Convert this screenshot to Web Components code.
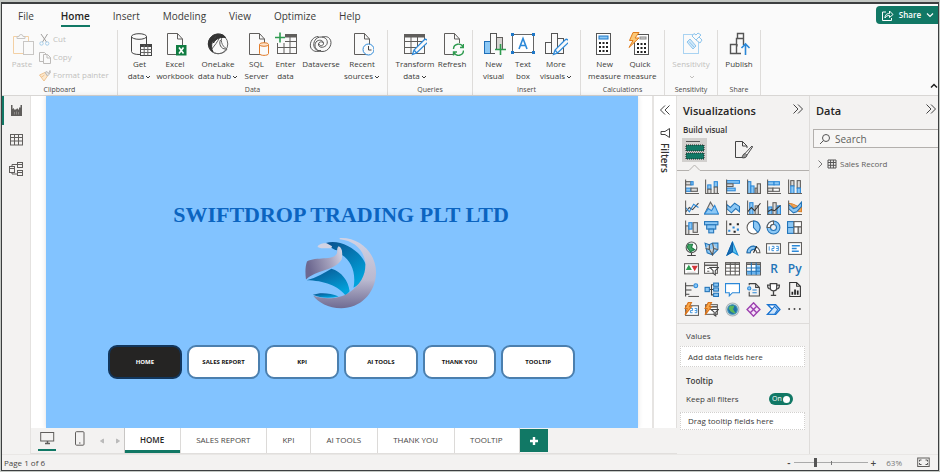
<!DOCTYPE html>
<html lang="en">
<head>
<meta charset="utf-8">
<title>Report editor</title>
<style>
html,body{height:100%}
body{margin:0;padding-top:2px;box-sizing:border-box;background:#c4c8c4;font-family:"Open Sans","Noto Sans",sans-serif;font-size:8px;line-height:12px;color:#3b3a39}
</style>
</head>
<body>
<report-app></report-app>
<script>
const K='#605e5c', N='#2b88d8', F='#8cc8f5', GR='#2e9b4f', LG='#d5d5d5';
const r=(x,y,w,h,f='none',s=K)=>`<rect x="${x}" y="${y}" width="${w}" height="${h}" fill="${f}" stroke="${s}"/>`;
const p=(d,s=K,f='none',w=1)=>`<path d="${d}" stroke="${s}" fill="${f}" stroke-width="${w}"/>`;
const c=(x,y,q,f='none',s=K)=>`<circle cx="${x}" cy="${y}" r="${q}" fill="${f}" stroke="${s}"/>`;
const paper=p('M4.5 1.5H14.5L19.5 7V22.5H4.5Z M14.5 1.5V7H19.5');
const pencil=p('M9.5 22.5L11 18L21 8A2 2 0 0 1 24 11L13.5 21Z M11 18L13.5 21',N,'#fafafa',1.2);
const ax=p('M1.5 .5V13.5H14');
const ICONS={
paste:[24,p('M7 4.5H3.5V21.5H18.5V4.5H15','#f3d0a4')+p('M7 6.5V4.5H9A2 2 0 0 1 13 4.5H15V6.5Z','#c8c6c4','#fafafa')+r(13.5,9.5,10,13,'#fafafa','#c8c6c4')],
cut:[13,p('M3 1L8.5 9 M9.5 1L4.5 9','#a19f9d')+c(3.5,10.5,1.7,'none','#a6cdea')+c(9.2,10.5,1.7,'none','#a6cdea')],
copy:[13,p('M5.5 10.5H1.5V1.5H6.5L8 3','#bdbbb9')+p('M5.5 3.5H9.5L12.5 6.5V12.5H5.5Z M9 3.5V7H12.5','#bdbbb9','#fafafa')],
painter:[13,p('M1.5 6L7 3.5L9.5 7L6 12Z M3 8.5L6.5 6','#f0c490','#fbe8cf')+p('M7 3.5L9 2.5L10.5 4.5L12 1.5L12.8 2.5L11 5.5L9.5 7Z','#bdbbb9','#e6e4e2')],
getdata:[24,p('M3.5 4.5V19.5C3.5 23.5 18.5 23.5 18.5 19.5V4.5','#444')+`<ellipse cx="11" cy="4.5" rx="7.5" ry="2.8" fill="none" stroke="#444"/>`+r(12.5,12.5,11,11,'#fafafa','#444')+p('M12.5 14H23.5','#444','none',2)+p('M12.5 17.5H23.5M12.5 20.5H23.5M16.2 13V23.5M19.8 13V23.5','#666')],
excel:[24,paper+`<rect x="13" y="13" width="10.5" height="10.5" fill="#107c41"/>`+p('M16 15.5L20.5 21.5M20.5 15.5L16 21.5','#fff','none',1.6)],
onelake:[24,c(12,12,9.8,'#fafafa','#666')+p('M4 7C7 1 14 1 17 3.5C14 7 15 14 21 17C18 23 8 23 5 18C8 14 12 10 14 4','#666')+p('M12 2.2C5 2.5 2 8 2.5 13C3.5 17 5 19 7 20C3.5 13 7 7 12 2.2Z M12 2.2C16 2 18 3 19.5 5.5C15 5 10 6 7.5 11C7 7 9 4 12 2.2Z','#333','#333')+p('M14.5 8C12.5 12 15 17 19.5 17','#555')],
sql:[24,paper+p('M14.5 12.5V21.5C14.5 24 23.5 24 23.5 21.5V12.5','#e07b2a','#fafafa')+`<ellipse cx="19" cy="12.5" rx="4.5" ry="1.8" fill="#fde4cc" stroke="#e07b2a"/>`],
enter:[24,r(3.5,2.5,19,19)+p('M4 4H23',K,'none',3)+p('M3.5 9.5H22.5M3.5 15.5H22.5M10 3V21.5M16 3V21.5')+`<path d="M0 0H11V11H0Z" fill="#fafafa"/>`+p('M1 5.5H11M6 .5V10.5',GR,'none',1.6)],
dataverse:[24,p('M14.5 11.5C14.5 9.5 10 9 9.5 12C9 15.5 14 16.5 17 13.5C19.5 11 18.5 5.5 13 5C6 4.5 4 11 5 14.5C6 18 9 19 12 18.5','#555')+p('M10 12C10.5 14.5 14.5 14 14.5 11.5C14.5 8 9.5 7 7 10C5 13 5.5 19 13 19.5C20 20 24.5 11 20.5 6.5C18.5 4 15 4.5 13 5','#555')+p('M12 18.5C8 20.5 3 19.5 1.5 15C.5 10 4 4.5 9.5 4.5','#555')],
recent:[24,paper+c(18.5,17.5,5.5,'#fafafa',N)+p('M18.5 14V18H21.5','#444')],
transform:[24,r(1.5,2.5,20,19)+p('M1 4H22',K,'none',3)+p('M1.5 9.5H21.5M1.5 15.5H15M8 3V21.5M14.5 3V16')+pencil],
refresh:[24,paper+`<circle cx="18.5" cy="17.5" r="6.5" fill="#fafafa"/>`+p('M13.5 17A5 5 0 0 1 23 15M23.5 12V15.5H20M23.5 18.5A5 5 0 0 1 14 20.5M13.5 23.5V20H17',GR,'none',1.4)],
newvisual:[24,r(2.5,9.5,6,12,F,'#1f6fb8')+r(14.5,5.5,6,16,'#d5d3d1')+r(8.5,1.5,6,20,'#fafafa','#555')+`<path d="M13 17H24V24H13Z" fill="#fafafa"/>`+p('M18.5 12V23M13 17.5H24',GR,'none',1.6)],
textbox:[24,r(1.5,2.5,21,18,'#fff','#666')+p('M8 17L12 6.5L16 17M9.3 13.5H14.7',N,'none',1.6)+`<path d="M0 1H3V4H0ZM21 1H24V4H21ZM0 19H3V22H0ZM21 19H24V22H21Z" fill="#1f78c8"/>`],
morevisuals:[24,r(1.5,10.5,6,11,'none','#555')+r(13.5,6.5,6,15,'none','#555')+r(7.5,1.5,6,20,'#fafafa','#555')+pencil],
calc:[24,r(4.5,1.5,14,21,'#fff','#555')+r(7,4,9,3,F,'#1f78c8')+[11,15,19].map(y=>[7,10.5,14].map(x=>`<rect x="${x}" y="${y-1}" width="2" height="2" fill="#222"/>`).join('')).join('')],
quick:[24,r(6.5,2.5,14,20,'#fff','#555')+r(12,5,6,2,'#ddd','#888')+[12,16,20].map(y=>[9,12.5,16].map(x=>`<rect x="${x}" y="${y-1}" width="2" height="2" fill="#222"/>`).join('')).join('')+p('M5 .5L1.5 8.5H5L1 15.5L11 6H7L11 .5Z','#e07b1a','#fbc877')],
sens:[24,r(4.5,2.5,15,19,'none','#a9d3f2')+p('M8 10L11 7L17 14L14 17ZM10 9.5L15.5 15.5','#8cc4ec','#d4eafa')+p('M13 4L17 8L21 11L23 8L20 5L22 3L19 1L17 3L15 1.5Z M17 8L20 5','#8cc4ec','#fafafa')],
publish:[24,p('M3.5 12.5H9.5V21.5H3.5ZM9.5 12.5V6.5H16.5V12M16.5 13V1.5H10.5V6.5M9.5 21.5H14M10 14.5V12','#555','none',1.4)+p('M18.5 23V12M14.5 16L18.5 12L22.5 16',N,'none',1.6)],
share:[13,p('M5 3H1.5V11.5H10.5V9','#fff')+p('M4 9C4 5.5 6 4.5 8.5 4.5V2L12 5.5L8.5 8.5V6.5C6.5 6.5 5 7 4 9Z','#fff')],
down:[6,p('M1 2L3 4L5 2','currentColor')],
up:[8,p('M1 5.5L4 2.5L7 5.5','#222','none',1.5)],
dleft:[12,p('M6 1.5L1.5 6L6 10.5M10.5 1.5L6 6L10.5 10.5','#444')],
dright:[12,p('M1.5 1.5L6 6L1.5 10.5M6 1.5L10.5 6L6 10.5','#444')],
right:[8,p('M2.5 .5L6 4L2.5 7.5','#777')],
funnel:[12,p('M10.5 1.5V10.5L6 7.5H2V4.5H6Z','#444')],
railReport:[13,`<path d="M1 1H2.5V5L4 4V5.5H6L7 4.5H8V6L9 5V3.5H10.5V1H12V12H1Z" fill="#605e5c"/>`+p('M4.5 10.5V8M6.5 10.5V7.5M8.5 10.5V8','#8a8886')],
table:[13,r(.5,1.5,12,10.5)+p('M.5 4.5H12.5M.5 8H12.5M4.5 1.5V12M8.5 1.5V12')],
model:[14,r(.5,4.5,5,6)+r(8.5,.5,5,5)+r(8.5,8.5,5,5)+p('M.5 6.5H5.5M8.5 2.5H13.5M8.5 10.5H13.5M3 4.5V2.5H8.5M3 10.5V12H8.5')],
search:[12,c(7,5,3.5,'none','#555')+p('M4.5 7.5L1 11','#555')],
desktop:[15,r(.7,1.5,13,8.5)+p('M5 12.5H10M7.5 10V12.5',K,'none',1.5)],
phone:[15,`<rect x="3.5" y=".7" width="8.5" height="13.5" rx="1" fill="none" stroke="#605e5c"/>`+p('M7 12H8.5')],
aleft:[6,p('M4.5 1L1.5 3L4.5 5Z','#bbb','#bbb')],
aright:[6,p('M1.5 1L4.5 3L1.5 5Z','#bbb','#bbb')],
plus:[10,p('M5 1V9M1 5H9','#fff','none',2.4)],
fit:[13,r(.7,2,11.5,8.5)+p('M2.5 5.5V4H4.5M8.5 4H10.5V5.5M10.5 7V8.5H8.5M4.5 8.5H2.5V7','#555')],
build:[20,p('M1 1.5H15','#555')+`<path d="M1 5H19V11H1ZM1 13H19V19H1Z" fill="#117865"/>`+`<path d="M1 5H19V11H1ZM1 13H19V19H1Z" fill="none" stroke="#222" stroke-dasharray="1 1"/>`],
format:[20,p('M11 17.5H2.5V1.5H9.5L14 6V8M9.5 1.5V6H14','#444')+p('M19 6L12 13.5L14 15L19.5 7Z','#444','#fff')+p('M12 13.5C9.5 14 10 16.5 8.5 17.5C11 18.5 14 17.5 14 15','#444','#999')],
logo:['45 112 218 218',`<defs><linearGradient id="g" x1="0" y1="0" x2="0" y2="1"><stop offset="0" stop-color="#d3d3e4"/><stop offset=".6" stop-color="#b9b8cf"/><stop offset="1" stop-color="#6f6b92"/></linearGradient><linearGradient id="h" x1="0" y1="0" x2=".6" y2="1"><stop offset="0" stop-color="#0a4f8c"/><stop offset="1" stop-color="#00a3dc"/></linearGradient><linearGradient id="k" x1="0" y1="0.3" x2="1" y2="0"><stop offset="0" stop-color="#6d6890"/><stop offset=".6" stop-color="#a9a6c0"/><stop offset="1" stop-color="#dcdbe8"/></linearGradient></defs>
<path fill="url(#h)" d="M108 130C150 116 212 150 229 195C229 232 216 252 192 266C200 220 186 185 156 166C160 150 150 142 142 152C128 150 122 140 108 130Z"/>
<path fill="url(#h)" d="M50 243C80 235 105 220 125 208C155 216 177 245 180 276L168 290C150 262 100 243 50 243Z"/>
<path fill="url(#g)" d="M150 115C215 112 262 165 260 222C258 285 210 328 155 328C115 328 85 310 70 290C105 302 150 300 180 279C213 258 230 225 228 190C222 150 195 124 150 119Z"/>
<path fill="url(#h)" d="M69 287C90 279 120 281 147 292C120 299 90 297 69 287Z"/>
<path fill="url(#k)" d="M51 186C80 170 135 185 142 160C144 151 140 146 147 140C157 143 160 160 156 180C135 215 80 210 48 241C45 218 46 200 51 186Z"/>
<path fill="#d2d2e2" d="M83 142C86 133 103 129 112 132L127 140L124 147C112 144 100 150 83 142Z"/>`]
};
const vb=(a)=>a.map(([x,y,f,s])=>r(x,y,3,13.5-y,f,s)).join('');
const VIS=[
['Stacked bar',r(1.5,2.5,5,3,'#ddd')+r(1.5,8.5,5,3,F,N)+r(6.5,8.5,6,3,'#ddd')+r(6.5,2.5,2,3,F,N)+ax],
['Stacked column',r(3.5,5.5,3,4,F,N)+r(3.5,9.5,3,4,'#ddd')+r(9.5,2.5,3,5,F,N)+r(9.5,7.5,3,6,'#ddd')+ax],
['Clustered bar',r(1.5,1.5,12,2.5,F,N)+r(1.5,4.5,6,2.5,'#ddd')+r(1.5,8.5,8,2.5,F,N)+ax],
['Clustered column',r(1.5,2.5,3,11,F,N)+r(4.5,6.5,3,7,F,N)+r(8.5,8.5,2,5,'#ddd')+r(10.5,4.5,3,9,'#ddd')+ax],
['100% bar',r(1.5,2.5,6,3,F,N)+r(7.5,2.5,5,3,F,N)+r(1.5,8.5,5,3,'#ddd')+r(6.5,8.5,6,3,'#fff')+ax],
['100% column',r(3.5,1.5,3,5,'#ddd')+r(3.5,6.5,3,7,F,N)+r(9.5,1.5,3,7,'#ddd')+r(9.5,8.5,3,5,F,N)+ax],
['Line',p('M1.5 11L5 7L8 9L13.5 3','#444')+p('M1.5 7L5 11L9 4L13.5 7',N)+ax],
['Area',p('M.5 13L6 2L13 13Z','#666','#ddd')+p('M.5 13L4 8L7 10L10 5L13.5 13Z',N,F)],
['Stacked area',p('M1.5 4L5 7L9 3L13.5 6V11L10 8L6 12L1.5 8Z','#2374b8',F)+ax],
['Line and stacked column',vb([[3.5,2.5,F,N],[8.5,5.5,'#ddd',K]])+p('M1.5 11L5 7L8 10L13.5 3','#333')+ax],
['Line and clustered column',vb([[2.5,6.5,F,N],[6.5,2.5,'#ddd',K],[10.5,5.5,F,N]])+p('M1.5 11L5 9L8 10L13.5 5','#333')+ax],
['Ribbon',p('M1.5 3C6 3 5 11 13.5 11V7C9 7 8 3 1.5 3Z','#d9822b','#f2a65a')+p('M1.5 4L6 8L9 7L13.5 2V6L9 11L6 12L1.5 8Z','#2374b8',F)+ax],
['Waterfall',r(1.5,5.5,3,8,'#ddd')+r(4.5,2.5,3,6,F,N)+r(8.5,2.5,4,9,'#ddd')+ax],
['Funnel',r(.5,1.5,12.5,3,F,'#2374b8')+r(2.5,4.5,8.5,4,F,'#2374b8')+r(4.5,8.5,4.5,3.5,F,'#2374b8')],
['Scatter',ax+`<path d="M4 3H6V5H4ZM11 3H13V5H11ZM8 10H10V12H8Z" fill="#222"/><path d="M7 6H9V8H7ZM3 9H5V11H3ZM11 8H13V10H11Z" fill="#2b88d8"/>`],
['Pie',c(7,7,6,'#fff')+p('M7 7V1A6 6 0 0 1 11 11.5Z','#2374b8',F)],
['Donut',c(7,7,6,F,'#2374b8')+c(7,7,2.8,'#f3f2f1','#2374b8')+p('M7 1A6 6 0 0 0 1 7H4A3 3 0 0 1 7 4Z',K,'#fff')],
['Treemap',r(.5,1.5,6,11,F,'#2374b8')+r(6.5,1.5,7,5,'#fff')+r(6.5,6.5,4,6,'#fff')+r(10.5,6.5,3,6,'#ddd')+p('M.5 7H6.5','#2374b8')],
['Map',c(7,6,5,'#fff','#555')+p('M4 3L8 3L7 6L10 8L6 10L3 6Z','#1e7a45','#3da562')+p('M3 13.5H11M7 11V13.5','#444')],
['Filled map',p('M1 2L5 3.5L8 2L13 2V8L8 13L3 11Z','#2374b8',F)+p('M5 3.5V8L1.5 7M8 2L9 7L13 8M5 8L8 13L9 7','#555','#cfd3d6')],
['Azure map',p('M7 1L12 13L7 10L2 13Z','#1b8fd6','#5fc3ee')+p('M7 1L7 10L2 13Z','#0f5fa8','#1872b8')],
['Gauge',p('M1 11A6 6 0 0 1 13 11H10A3 3 0 0 0 4 11Z',K,'#fff')+p('M1 11A6 6 0 0 1 9 5.2L8 8A3 3 0 0 0 4 11Z','#2374b8',F)+p('M7 11L10 5','#222')],
['Card',r(.5,2.5,13,9,'#fff')+p('M3 5V9M5.5 5H7.5V7H5.5V9H7.5M9.5 5H11.5V9H9.5M9.5 7H11.5',N,'none',.8)],
['Multi-row card',r(1.5,1.5,12,11,'#fff')+p('M4.5 4.5H12M4.5 7H9M4.5 9.5H11',N,'none',1.4)],
['KPI',r(.5,2.5,13,9.5,'#fff')+p('M2.5 8L4.5 4.5L6.5 8Z',GR,GR)+p('M8 5H12L10 8.5Z','#d13438','#d13438')+p('M3 10.5H11',LG)],
['Slicer',r(.5,1.5,12,10,'#fff')+p('M.5 4H12.5',K,'none',1.5)+p('M3 7H5M3 9.5H5')+p('M5.5 6H13.5L10.5 9V13L8.5 11.5V9Z','#444','#fff')],
['Table',r(.5,1.5,13,11.5,'#fff')+p('M.5 3H13.5',K,'none',1.5)+p('M.5 6.5H13.5M.5 9.5H13.5M5 1.5V13M9.5 1.5V13')],
['Matrix',r(.5,1.5,13,11.5,'#fff')+`<path d="M9 4H13V12.5H9ZM1 9.5H13V12.5H1Z" fill="#6ab4ee"/>`+p('M.5 3H13.5',K,'none',1.5)+p('M.5 6.5H13.5M.5 9.5H13.5M5 1.5V13M9.5 1.5V13','#2374b8')],
['R script','R'],['Python','Py'],
['Key influencers',p('M1.5 .5V13.5M1.5 3.5H9M1.5 7.5H7M1.5 11.5H5','#444')+c(11,3.5,1.8,F,N)+p('M4 13.5H14')],
['Decomposition tree',p('M5 7H9M7 7V2.5H9M7 7V12H9','#444')+r(1,5,4,4,F,'#2374b8')+r(9,1,4.5,3,F,'#2374b8')+r(9,5.5,4.5,3,F,'#2374b8')+r(9,10.5,4.5,3,F,'#2374b8')],
['Q and A',p('M.5 1.5H13.5V10H7L4 13V10H.5Z','#2b88d8','#fff')],
['Narrative',p('M3 3V1.5H9L12.5 5V13H3V9M9 1.5V5H12.5','#444')+c(3,6,1.5,F,N)+p('M6 7.5H10M6 10H10',N)],
['Goals',p('M4 1.5H10V6C10 9 4 9 4 6ZM4 3H1.5C1.5 6 3 6.5 4 6.5M10 3H12.5C12.5 6 11 6.5 10 6.5M7 8.5V12M4.5 12.5H9.5','#444','#fff',1.2)],
['Paginated report',p('M2.5 .5H9L12.5 4V13.5H2.5ZM9 .5V4H12.5','#333')+p('M5 12V9M7.5 12V7M10 12V8','#222','none',1.6)],
['New card',r(1.5,3.5,12,9,'#fff')+p('M6 6H8V8H6V10H8M10 6H12V10H10M10 8H12',N,'none',.8)+p('M4 .5L1 6H3L1 12L7 4.5H5L7 .5Z','#d9731a','#f8a94e')],
['New slicer',r(1.5,2.5,11,9,'#fff')+p('M1.5 4.5H12.5',K,'none',1.5)+p('M6.5 7H13.5L11 9.5V13L9.5 12V9.5Z','#444','#fff')+p('M4 .5L1 6H3L1 12L7 4.5H5L7 .5Z','#d9731a','#f8a94e')],
['ArcGIS',c(7,7,6,'#d9e2e4','#a9b4b8')+c(7,7,4.5,'#1e6fa8','#3b91b8')+p('M5 4L8 4L7 7L9 10L6 9L4 6Z','#5cb85c','#5cb85c')],
['Power Apps',p('M7 .8L13 7L7 13.2L1 7ZM4 4L10 10M10 4L4 10','#9b3fae','#f6e4f8',1.3)],
['Power Automate',p('M1.5 2.5H9L13 7L9 11.5H1.5L6 7Z','#1a73d0','#fff',1.3)+p('M1.5 11.5L8 4L11 7L8 11.5Z','#1a73d0','#cfe5fa')],
['More',[2,7,12].map(x=>`<circle cx="${x}" cy="6.5" r=".9" fill="#444"/>`).join('')]
];
const svg=(box,body,size=box)=>`<svg aria-hidden="true" viewBox="${typeof box==='number'?`0 0 ${box} ${box}`:box}" ${typeof box==='number'?`width="${size}" height="${size}"`:''}>${body}</svg>`;

function define(tag,css,html){
  customElements.define(tag,class extends HTMLElement{
    connectedCallback(){
      if(this.shadowRoot) return;
      const root=this.attachShadow({mode:'open'});
      root.innerHTML=`<style>*{box-sizing:border-box}button{font:inherit;color:inherit;background:none;border:0;padding:0;margin:0}svg{display:block;flex:none}${css}</style>${typeof html==='function'?html(this):html}`;
    }
  });
}
define('ui-icon',':host{display:inline-block;flex:none;line-height:0}svg{max-width:100%}',e=>svg(...ICONS[e.getAttribute('name')]));

define('menu-tab',`:host{display:block}
button{font-size:10px;line-height:15px;height:23px;padding:4px 0 0;border-bottom:2px solid transparent;display:block}
:host([active]) button{font-weight:600;color:#252423;border-color:#117865}`,'<button><slot></slot></button>');

define('menu-bar',`:host{display:flex;align-items:flex-start;justify-content:space-between;height:26px}
nav{display:flex;gap:23px;padding-left:16px}
nav>:first-child{margin-right:4px}
.share{display:flex;align-items:center;gap:5px;height:18px;margin-top:2px;padding:0 4px 0 5px;background:#117865;color:#fff;border-radius:4px 0 0 4px;font-weight:600}`,
`<nav><menu-tab>File</menu-tab><menu-tab active>Home</menu-tab><menu-tab>Insert</menu-tab><menu-tab>Modeling</menu-tab><menu-tab>View</menu-tab><menu-tab>Optimize</menu-tab><menu-tab>Help</menu-tab></nav>
<button class="share"><ui-icon name="share"></ui-icon>Share<svg viewBox="0 0 8 8" width="8" height="8"><path d="M1 2.5L4 5.5L7 2.5" stroke="#fff" fill="none" stroke-width="1.2"/></svg></button>`);

define('ribbon-button',`:host{display:flex;justify-content:center;min-width:0;padding-top:2px}
button{display:flex;flex-direction:column;align-items:center;white-space:nowrap;line-height:12px;text-align:center}
.t{padding-top:2px}
:host([disabled]) button{color:#c1bfbd}
.t ui-icon{vertical-align:middle;margin-left:1px}`,
e=>`<button ${e.hasAttribute('disabled')?'disabled':''}><ui-icon name="${e.getAttribute('icon')}"></ui-icon><span class="t"><slot></slot>${e.hasAttribute('drop')?'<ui-icon name="down"></ui-icon>':''}</span></button>`);

define('mini-button',`:host{display:block}button{display:flex;align-items:center;gap:2px;color:#c1bfbd;height:18px;white-space:nowrap}`,
e=>`<button disabled><ui-icon name="${e.getAttribute('icon')}"></ui-icon><slot></slot></button>`);

define('ribbon-group',`:host{display:flex;flex-direction:column;justify-content:space-between;border-right:1px solid #dedcda}
.row{display:grid;grid-auto-flow:column;grid-template-columns:var(--cols);padding:0 var(--pad,2px);align-items:start}
.cap{font-size:7px;line-height:10px;text-align:center;color:#4a4846}`,
e=>`<div class="row"><slot></slot></div><div class="cap">${e.getAttribute('label')}</div>`);

define('ribbon-bar',`:host{display:flex;height:66px;border-bottom:1px solid #d8d6d4}
.collapse{margin-left:auto;align-self:flex-end;padding-bottom:2px}`,
`<ribbon-group label="Clipboard" style="--cols:32px 75px;--pad:4px"><ribbon-button icon="paste" disabled>Paste</ribbon-button><div><mini-button icon="cut">Cut</mini-button><mini-button icon="copy">Copy</mini-button><mini-button icon="painter">Format painter</mini-button></div></ribbon-group>
<ribbon-group label="Data" style="--cols:37px 34px 52px 25px 33px 38px 44px;--pad:3px"><ribbon-button icon="getdata" drop>Get<br>data</ribbon-button><ribbon-button icon="excel">Excel<br>workbook</ribbon-button><ribbon-button icon="onelake" drop>OneLake<br>data hub</ribbon-button><ribbon-button icon="sql">SQL<br>Server</ribbon-button><ribbon-button icon="enter">Enter<br>data</ribbon-button><ribbon-button icon="dataverse">Dataverse</ribbon-button><ribbon-button icon="recent" drop>Recent<br>sources</ribbon-button></ribbon-group>
<ribbon-group label="Queries" style="--cols:50px 24px 6px"><ribbon-button icon="transform" drop>Transform<br>data</ribbon-button><ribbon-button icon="refresh">Refresh</ribbon-button></ribbon-group>
<ribbon-group label="Insert" style="--cols:27px 32px 34px;--pad:7px"><ribbon-button icon="newvisual">New<br>visual</ribbon-button><ribbon-button icon="textbox">Text<br>box</ribbon-button><ribbon-button icon="morevisuals" drop>More<br>visuals</ribbon-button></ribbon-group>
<ribbon-group label="Calculations" style="--cols:35px 36px;--pad:6px"><ribbon-button icon="calc">New<br>measure</ribbon-button><ribbon-button icon="quick">Quick<br>measure</ribbon-button></ribbon-group>
<ribbon-group label="Sensitivity" style="--cols:48px"><ribbon-button icon="sens" disabled drop>Sensitivity<br></ribbon-button></ribbon-group>
<ribbon-group label="Share" style="--cols:38px"><ribbon-button icon="publish">Publish</ribbon-button></ribbon-group>
<button class="collapse" aria-label="Collapse ribbon"><ui-icon name="up"></ui-icon></button>`);

define('view-rail',`:host{display:flex;flex-direction:column;background:#f3f2f1;border-right:1px solid #e4e2e0}
button{height:29px;display:grid;place-items:center;border-left:2px solid transparent;padding-right:2px}
.on{border-color:#117865}`,
`<button class="on" aria-label="Report view"><ui-icon name="railReport"></ui-icon></button><button aria-label="Table view"><ui-icon name="table"></ui-icon></button><button aria-label="Model view"><ui-icon name="model"></ui-icon></button>`);

define('nav-tile',`:host{display:block;flex:1}
button{width:100%;height:34px;border:2px solid #4b7fae;border-radius:9px;background:#fff;color:#111;font-size:6px;font-weight:700;line-height:10px;white-space:nowrap}
:host([active]) button{background:#252423;color:#fff;border-color:#12365c}`,'<button><slot></slot></button>');

define('report-page',`:host{display:flex;flex-direction:column;align-items:center;background:#82c3ff;box-shadow:0 0 5px #0002;padding-right:2px}
h1{margin:104px 0 0;font:700 22px/30px "Liberation Serif",serif;color:#0b64c0;white-space:nowrap}
.logo{width:72px;margin:7px 0 0}
.logo ui-icon{display:block}
.tiles{display:flex;gap:5px;align-self:stretch;padding:0 61px 0 62px;margin-top:36px}`,
`<h1>SWIFTDROP TRADING PLT LTD</h1><div class="logo"><ui-icon name="logo"></ui-icon></div>
<div class="tiles"><nav-tile active>HOME</nav-tile><nav-tile>SALES REPORT</nav-tile><nav-tile>KPI</nav-tile><nav-tile>AI TOOLS</nav-tile><nav-tile>THANK YOU</nav-tile><nav-tile>TOOLTIP</nav-tile></div>`);

define('filters-strip',`:host{display:flex;flex-direction:column;align-items:center;gap:8px;padding-top:8px;background:#fff;border-left:2px solid #e6e4e2;border-right:1px solid #e1dfdd}
button{display:block}
span{writing-mode:vertical-rl;font-size:10px;line-height:14px;font-weight:600;color:#323130;margin-top:-4px}`,
`<button aria-label="Expand filters"><ui-icon name="dleft"></ui-icon></button><ui-icon name="funnel"></ui-icon><span>Filters</span>`);

define('page-tab',`:host{display:block;border-right:1px solid #dcdad8}
button{height:100%;padding:0 16px 0 15px;background:#fff;border-bottom:3px solid #fff;border-top:2px solid #fff;white-space:nowrap;color:#484644}
:host([active]) button{font-weight:600;color:#252423;border-bottom-color:#117865}`,'<button><slot></slot></button>');

define('page-tabs',`:host{display:flex;height:26px;background:#f3f2f1;border-bottom:1px solid #e1dfdd}
.modes{display:flex;align-items:stretch;width:94px;border-right:1px solid #c8c6c4;flex:none}
.modes button{display:grid;justify-items:center;align-content:start;padding-top:3px}
.d{width:18px;margin-left:7px;border-bottom:2px solid #117865;height:23px}
.ph{width:15px;margin-left:16px}.modes .ar{align-content:center;padding:0;width:6px;margin-left:12px}.modes .ar+.ar{margin-left:10px}
.add{width:28px;margin:1px 0;background:#117865;display:grid;place-items:center}`,
`<div class="modes"><button class="d" aria-label="Desktop layout"><ui-icon name="desktop"></ui-icon></button><button class="ph" aria-label="Mobile layout"><ui-icon name="phone"></ui-icon></button><button class="ar" aria-label="Previous"><ui-icon name="aleft"></ui-icon></button><button class="ar" aria-label="Next"><ui-icon name="aright"></ui-icon></button></div>
<page-tab active>HOME</page-tab><page-tab>SALES REPORT</page-tab><page-tab>KPI</page-tab><page-tab>AI TOOLS</page-tab><page-tab>THANK YOU</page-tab><page-tab>TOOLTIP</page-tab><button class="add" aria-label="New page"><ui-icon name="plus"></ui-icon></button>`);

define('pane-header',`:host{display:flex;align-items:center;justify-content:space-between;height:29px;padding:0 var(--end,5px) 0 6px}
h2{margin:0;font-size:11px;line-height:16px;font-weight:600;color:#252423}`,
`<h2><slot></slot></h2><button aria-label="Collapse pane"><ui-icon name="dright"></ui-icon></button>`);

define('visual-gallery',`:host{display:grid;grid-template-columns:repeat(6,1fr);grid-auto-rows:15px;align-content:space-between;height:152px;box-sizing:border-box;padding:8px 4px 6px}
button{display:grid;place-items:center;color:#2374b8;font-size:12px;font-weight:600;line-height:14px}`,
()=>VIS.map(([n,b])=>`<button aria-label="${n}">${b.length<3?b:svg(14,b,15)}</button>`).join(''));

define('field-well',`:host{display:block;box-sizing:border-box;margin:0 4px 0 3px;padding:0 7px;background:#fff;border:1px dotted #d2d0ce;height:var(--h);line-height:calc(var(--h) - 2px)}`,'<slot></slot>');

define('toggle-switch',`:host{display:flex;justify-content:space-between;align-items:center;padding:0 16px 0 9px;height:14px}
label.s{display:grid;align-items:center;width:24px;height:12px;border-radius:6px;background:#117865;color:#fff;font-size:7px}
label.s>*{grid-area:1/1}label.s span{padding-left:3px}
input{appearance:none;margin:0 3px 0 auto;width:7px;height:7px;border-radius:50%;background:#fff}`,
`<label for="k"><slot></slot></label><label class="s"><span>On</span><input id="k" type="checkbox" role="switch" checked></label>`);

define('visual-pane',`:host{display:flex;flex-direction:column;background:#f3f2f1;border-right:1px solid #dedcda}
h3{margin:0;padding:0 6px;font-size:8px;line-height:9px;font-weight:600;color:#323130}
.modes{display:flex;gap:23px;padding:4px 5px 0;height:30px;box-sizing:border-box}
.modes button{width:25px;height:24px;display:grid;place-items:center}
.modes .on{background:#d2d0ce}
.edge{display:block;width:100%;height:7px}
.div{border-top:1px solid #dedcda;padding:6px 9px 4px}
.tt{font-weight:600;padding:8px 9px 5px}
toggle-switch{margin-bottom:6px}`,
`<pane-header>Visualizations</pane-header><h3>Build visual</h3>
<div class="modes"><button class="on" aria-label="Build visual"><ui-icon name="build"></ui-icon></button><button aria-label="Format visual"><ui-icon name="format"></ui-icon></button></div>
<svg class="edge" viewBox="0 0 132 7" preserveAspectRatio="none"><path d="M0 6.5H12L17.5 1L23 6.5H132" fill="none" stroke="#b3b0ad"/></svg>
<visual-gallery></visual-gallery>
<div class="div">Values</div><field-well style="--h:21px">Add data fields here</field-well>
<div class="tt">Tooltip</div><toggle-switch>Keep all filters</toggle-switch><field-well style="--h:18px">Drag tooltip fields here</field-well>`);

define('data-pane',`:host{display:block;background:#f3f2f1;--end:1px}
.q{display:flex;align-items:center;gap:4px;height:19px;margin:4px 0 0 3px;padding-left:5px;border:1px solid #b3b0ad;border-right:0;background:#f7f6f5}
input{flex:1;min-width:0;border:0;background:none;padding:0;font:inherit;font-size:10px;outline:0}
input::placeholder{color:#605e5c;opacity:1}
.row{display:flex;align-items:center;gap:3px;margin-top:10px;padding-left:6px;color:#605e5c}
.row svg{width:10px;height:10px}`,
`<pane-header>Data</pane-header><div class="q"><ui-icon name="search"></ui-icon><input type="search" aria-label="Search" placeholder="Search"></div>
<button class="row"><ui-icon name="right"></ui-icon><svg viewBox="0 0 10 10"><path d="M1 1H9V9H1ZM1 3.5H9M1 6.3H9M3.6 1V9M6.4 1V9" fill="none" stroke="#555"/></svg>Sales Record</button>`);

define('status-bar',`:host{display:flex;align-items:center;box-sizing:border-box;height:16px;padding:0 8px 0 2px;background:#f3f2f1;border-top:1px solid #e9e7e5;color:#484644}
.z{margin-left:auto;display:flex;align-items:center;gap:3px}
.z button{font-size:10px;font-weight:600;line-height:12px}
input{appearance:none;width:74px;height:10px;margin:0;background:linear-gradient(#777,#777) 37px 50%/1px 4px no-repeat,linear-gradient(#aaa,#aaa) 0 50%/100% 1px no-repeat}
input::-webkit-slider-thumb{appearance:none;width:3px;height:9px;background:#555}
span{color:#777;margin:0 12px 0 7px}
ui-icon{display:block}`,
`<div>Page 1 of 6</div><div class="z"><button aria-label="Zoom out">-</button><input type="range" aria-label="Zoom" value="29"><button aria-label="Zoom in">+</button><span>63%</span><button aria-label="Fit to page"><ui-icon name="fit"></ui-icon></button></div>`);

define('report-app',`:host{display:flex;flex-direction:column;height:calc(100vh - 3px);margin:0 1px;border:1px solid #3c3f40;border-top-width:2px;background:#fafafa;box-sizing:border-box}
main{flex:1;min-height:0;display:grid;grid-template-columns:29px 1fr 133px 128px}
.center{display:flex;flex-direction:column;min-width:0}
.work{flex:1;display:grid;grid-template-columns:1fr 25px;background:#fff}
report-page{margin:0 14px 0 15px}`,
`<menu-bar></menu-bar><ribbon-bar></ribbon-bar>
<main><view-rail></view-rail><div class="center"><div class="work"><report-page></report-page><filters-strip></filters-strip></div><page-tabs></page-tabs></div><visual-pane></visual-pane><data-pane></data-pane></main>
<status-bar></status-bar>`);
</script>
</body>
</html>
